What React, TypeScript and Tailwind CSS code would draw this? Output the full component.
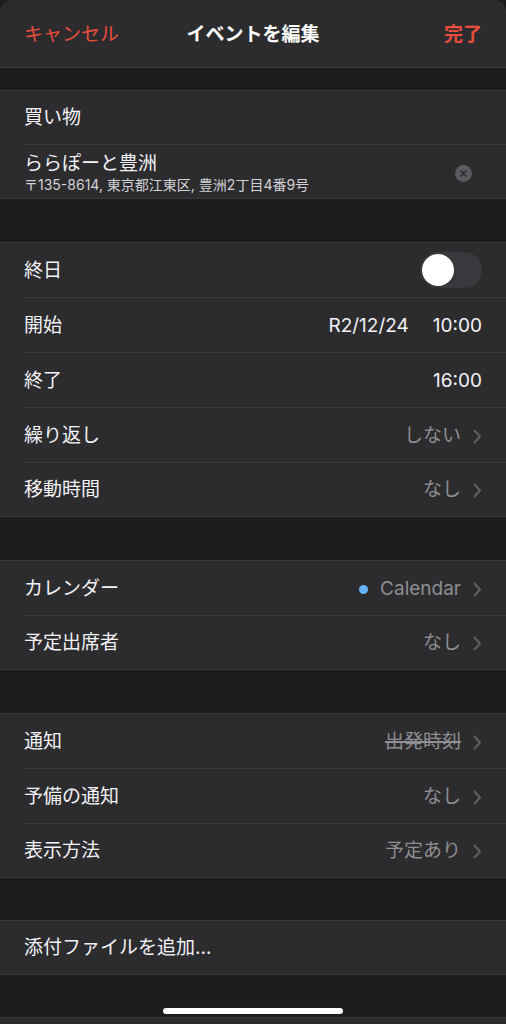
import React from "react";

const font = { fontFamily: 'Inter, "Noto Sans CJK JP", "Noto Sans", sans-serif' };

function Chevron() {
  return (
    <svg width="9" height="15" viewBox="0 0 9 15" className="ml-3 shrink-0">
      <path d="M1.5 1.5 L7 7.5 L1.5 13.5" fill="none" stroke="#5f5f64" strokeWidth="2" strokeLinecap="round" strokeLinejoin="round" />
    </svg>
  );
}

interface RowProps {
  label: string;
  children?: React.ReactNode;
  last?: boolean;
  h?: string;
}

function Row({ label, children, last, h }: RowProps) {
  return (
    <div className="pl-6">
      <div className={`${h ?? (last ? "h-[53px]" : "h-[55px]")} flex items-center pr-6 pt-[2px] ${last ? "" : "border-b border-[#3a3a3c]"}`}>
        <span className="text-[19px] text-[#f2f2f7] flex-1">{label}</span>
        {children}
      </div>
    </div>
  );
}

function Group({ children }: { children: React.ReactNode }) {
  return <div className="bg-[#2c2c2e] border-y border-[#3a3a3c]">{children}</div>;
}

export default function App() {
  return (
    <div className="w-[506px] h-[1024px] bg-[#1c1c1e] overflow-hidden flex flex-col" style={font}>
      {/* Header */}
      <div className="h-[68px] bg-[#2c2c2e] rounded-t-[12px] border-b border-[#3a3a3c] grid grid-cols-[1fr_auto_1fr] items-center px-6 pt-[4px] shrink-0">
        <span className="text-[19px] text-[#eb4d3d]">キャンセル</span>
        <span className="text-[19px] font-bold text-white">イベントを編集</span>
        <span className="text-[19px] font-bold text-[#eb4d3d] justify-self-end">完了</span>
      </div>

      <div className="h-[22px]" />

      <Group>
        <Row label="買い物" h="h-[54px]" />
        <div className="pl-6">
          <div className="h-[53px] flex items-center pr-[34px] pt-[3px]">
            <div className="flex-1 flex flex-col leading-tight">
              <span className="text-[19px] text-[#f2f2f7]">ららぽーと豊洲</span>
              <span className="text-[14px] text-[#d1d1d6]">〒135-8614, 東京都江東区, 豊洲2丁目4番9号</span>
            </div>
            <div className="w-[17px] h-[17px] rounded-full bg-[#5a5a5f] flex items-center justify-center">
              <svg width="7" height="7" viewBox="0 0 7 7">
                <path d="M1 1 L6 6 M6 1 L1 6" stroke="#2c2c2e" strokeWidth="1.6" strokeLinecap="round" />
              </svg>
            </div>
          </div>
        </div>
      </Group>

      <div className="h-[43px]" />

      <Group>
        <Row label="終日">
          <div className="w-[62px] h-[36px] rounded-full bg-[#39393d] p-[2px] flex items-center -mt-[2px]">
            <div className="w-[32px] h-[32px] rounded-full bg-white shadow" />
          </div>
        </Row>
        <Row label="開始">
          <span className="text-[19px] text-[#f2f2f7]">R2/12/24</span>
          <span className="text-[19px] text-[#f2f2f7] ml-6">10:00</span>
        </Row>
        <Row label="終了">
          <span className="text-[19px] text-[#f2f2f7]">16:00</span>
        </Row>
        <Row label="繰り返し">
          <span className="text-[19px] text-[#8e8e93]">しない</span>
          <Chevron />
        </Row>
        <Row label="移動時間" last>
          <span className="text-[19px] text-[#8e8e93]">なし</span>
          <Chevron />
        </Row>
      </Group>

      <div className="h-[43px]" />

      <Group>
        <Row label="カレンダー">
          <span className="w-[9px] h-[9px] rounded-full bg-[#64b5f6] mr-3" />
          <span className="text-[19px] text-[#8e8e93]">Calendar</span>
          <Chevron />
        </Row>
        <Row label="予定出席者" last>
          <span className="text-[19px] text-[#8e8e93]">なし</span>
          <Chevron />
        </Row>
      </Group>

      <div className="h-[43px]" />

      <Group>
        <Row label="通知">
          <span className="text-[19px] text-[#8e8e93] line-through decoration-[1.5px] decoration-[#8e8e93]">出発時刻</span>
          <Chevron />
        </Row>
        <Row label="予備の通知">
          <span className="text-[19px] text-[#8e8e93]">なし</span>
          <Chevron />
        </Row>
        <Row label="表示方法" last>
          <span className="text-[19px] text-[#8e8e93]">予定あり</span>
          <Chevron />
        </Row>
      </Group>

      <div className="h-[42px]" />

      <Group>
        <Row label="添付ファイルを追加..." last />
      </Group>

      <div className="flex-1 flex flex-col">
        <div className="flex-1 flex items-end justify-center pb-[3px]">
          <div className="w-[180px] h-[6px] rounded-full bg-white" />
        </div>
        <div className="h-[7px] bg-[#2c2c2e] border-t border-[#3a3a3c]" />
      </div>
    </div>
  );
}
